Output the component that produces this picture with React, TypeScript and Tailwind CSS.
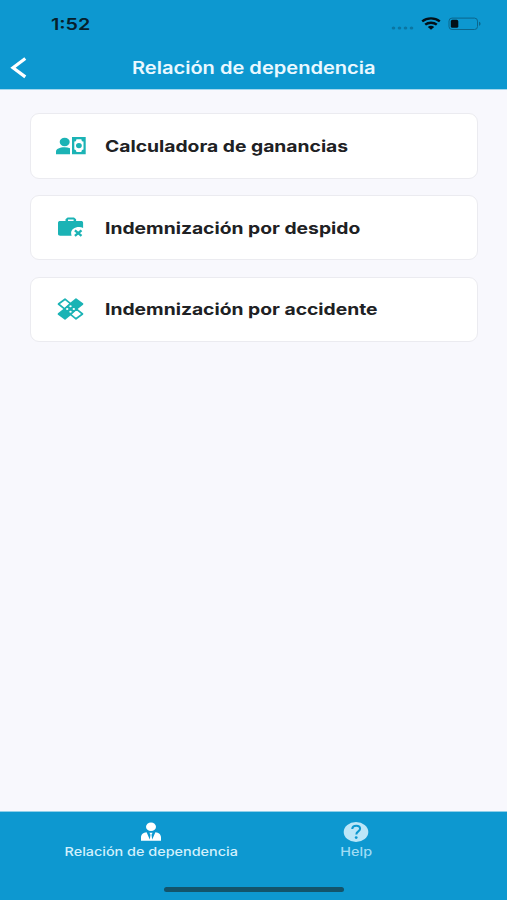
import type { ReactNode } from "react";

const font = "font-['Inter','Liberation_Sans',sans-serif]";

function PersonMoneyIcon() {
  return (
    <svg className="h-[18px] w-[30px]" viewBox="0 0 30 18" fill="#1bb3b5">
      <ellipse cx="8.700" cy="5" rx="5" ry="4.200" />
      <path d="M0 17.200v-2.800c0-2.200 3.600-4.100 8.600-4.100 2 0 3.800.4 5.400 1v5.900z" />
      <path fillRule="evenodd" d="M16 0h13.700v17.200H16zM20.400 2.200c0 1.500-.8 2.300-2.100 2.400v8c1.300.1 2.100 1 2.100 2.400h5c0-1.400.8-2.300 2.100-2.400v-8c-1.300-.1-2.100-.9-2.100-2.400z" />
      <ellipse cx="22.900" cy="8.600" rx="2.900" ry="2.700" />
    </svg>
  );
}

function BriefcaseIcon() {
  return (
    <svg className="ml-[2px] h-[21px] w-[28px]" viewBox="0 0 28 21">
      <path fill="#1bb3b5" fillRule="evenodd" d="M7.500 4V2.200L9.600.5h6.400l2.100 1.700V4h5c1.200 0 2 .7 2 1.700v5.400c-1.200-.7-2.500-1-3.900-1-4.600 0-8.100 2.600-8.100 6 0 .8.200 1.700.5 2.600H2.100C.9 18.700 0 18 0 17V5.700C0 4.700.9 4 2.100 4zM10 4h5.600V2.400H10z" />
      <path d="m16.900 13.300 6.600 5.600M23.500 13.300l-6.600 5.600" stroke="#1bb3b5" strokeWidth="2.300" />
    </svg>
  );
}

function BandageIcon() {
  return (
    <svg className="ml-[1px] h-[22px] w-[27px]" viewBox="0 0 27 22">
      <g stroke="#1bb3b5" strokeWidth="1.700" strokeLinejoin="round">
        <path fill="white" d="m8 1.200 5.500 4.500-6 5.200L1.500 6zM19.500 11.100l6 4.900-6.500 4.800-5.500-4.500z" />
        <path fill="#1bb3b5" d="m19 1.200 6.500 4.800-6 4.900-6-5.200zM7.500 11.100l6 5.200L8 20.800 1.500 16z" />
        <path fill="#1bb3b5" d="m13.500 6.200 5.500 4.800-5.500 4.800L8 11z" />
      </g>
      <g fill="white">
        <ellipse cx="13.500" cy="8.200" rx="1.200" ry="1" />
        <ellipse cx="10.200" cy="11" rx="1.200" ry="1" />
        <ellipse cx="16.800" cy="11" rx="1.200" ry="1" />
        <ellipse cx="13.500" cy="13.800" rx="1.200" ry="1" />
      </g>
    </svg>
  );
}

function Card({ icon, children }: { icon: ReactNode; children: ReactNode }) {
  return (
    <div className="flex h-[65.500px] items-center rounded-[9px] border border-[#ebebf0] bg-white pl-[25px]">
      <div className="flex w-[49px] items-center">{icon}</div>
      <span className="origin-left scale-x-[1.205] whitespace-nowrap text-[16px] font-bold text-[#202124]">{children}</span>
    </div>
  );
}

export default function App() {
  return (
    <div className={`flex h-[900px] w-full flex-col overflow-hidden bg-[#f8f8fd] ${font}`}>
      <header className="h-[89px] shrink-0 bg-[#0d98d0]">
        <div className="flex h-[47px] items-center pl-[51px]">
          <span className="w-[340px] shrink-0 origin-left scale-x-[1.230] whitespace-nowrap text-[16px] font-semibold text-[#06202c]">1:52</span>
          <svg className="h-[16px] w-[92px] shrink-0" viewBox="0 0 92 16">
            <g fill="#0b76a2">
              <ellipse cx="2.500" cy="12" rx="1.800" ry="1.500" />
              <ellipse cx="8.500" cy="12" rx="1.800" ry="1.500" />
              <ellipse cx="14.500" cy="12" rx="1.800" ry="1.500" />
              <ellipse cx="20.500" cy="12" rx="1.800" ry="1.500" />
            </g>
            <g fill="none" stroke="#031018" strokeWidth="2.400">
              <path d="M31.200 5.400c5-4 12.600-4 17.600 0" />
              <path d="M34.200 8.700c3.200-2.700 8.400-2.700 11.600 0" />
            </g>
            <path fill="#031018" d="M36.800 10.900c1.800-1.500 4.600-1.500 6.400 0L40 13.700z" />
            <rect x="58" y="2.100" width="28.500" height="11.400" rx="3" fill="none" stroke="#0b668c" />
            <rect x="59.800" y="3.800" width="7.500" height="8" rx="1.600" fill="#031018" />
            <path fill="#0b668c" d="M88 5.800c2 .6 2 3.400 0 4z" />
          </svg>
        </div>
        <div className="flex h-[41px] items-center pl-[10px]">
          <svg className="h-[22px] w-[18px] shrink-0" viewBox="0 0 18 22">
            <path d="M15.300 1.500 3 10.700l12.300 9.200" fill="none" stroke="white" strokeWidth="3.200" />
          </svg>
          <h1 className="ml-[104px] origin-left scale-x-[1.180] whitespace-nowrap pt-[2px] text-[17px] font-semibold text-[#eaf8ff]">Relación de dependencia</h1>
        </div>
      </header>
      <main className="flex flex-1 flex-col gap-[16.250px] border-t border-[#a5d8ee] pt-[23px] pr-[29px] pl-[30px]">
        <Card icon={<PersonMoneyIcon />}>Calculadora de ganancias</Card>
        <Card icon={<BriefcaseIcon />}>Indemnización por despido</Card>
        <Card icon={<BandageIcon />}>Indemnización por accidente</Card>
      </main>
      <footer className="flex h-[89px] shrink-0 flex-col items-center border-t border-[#8fcfe9] bg-[#0d98d0]">
        <div className="flex h-[75px] w-full pt-[10px] pl-[48px]">
          <div className="flex w-[206px] flex-col items-center">
            <svg className="h-[20px] w-[22px]" viewBox="0 0 22 20" fill="white">
              <ellipse cx="11" cy="4.700" rx="5" ry="4.300" />
              <path d="M1 18.700v-3.300c0-3 2.200-5.100 5.600-5.200l3.200 7.300.7-4.700-1.100-2h3.200l-1.100 2 .7 4.700 3.200-7.300c3.400.1 5.600 2.200 5.600 5.200v3.300z" />
            </svg>
            <span className="scale-x-[1.200] whitespace-nowrap text-[12px] leading-[20px] font-medium text-[#d2f0fc]">Relación de dependencia</span>
          </div>
          <div className="flex w-[204px] flex-col items-center">
            <svg className="h-[20px] w-[26px]" viewBox="0 0 26 20">
              <ellipse cx="13" cy="10" rx="12.300" ry="10" fill="#bce6f8" />
              <path d="M9.200 7c.2-2 1.700-3.200 4-3.200 2.300 0 3.900 1.200 3.900 3 0 2.500-3.800 2.700-3.800 5.600" fill="none" stroke="#0d98d0" strokeWidth="2" />
              <ellipse cx="13.200" cy="15.600" rx="1.400" ry="1.300" fill="#0d98d0" />
            </svg>
            <span className="scale-x-[1.200] whitespace-nowrap text-[12px] leading-[20px] font-medium text-[#9fdcf4]">Help</span>
          </div>
        </div>
        <div className="h-[5px] w-[180px] rounded-full bg-[#13546b]" />
      </footer>
    </div>
  );
}
